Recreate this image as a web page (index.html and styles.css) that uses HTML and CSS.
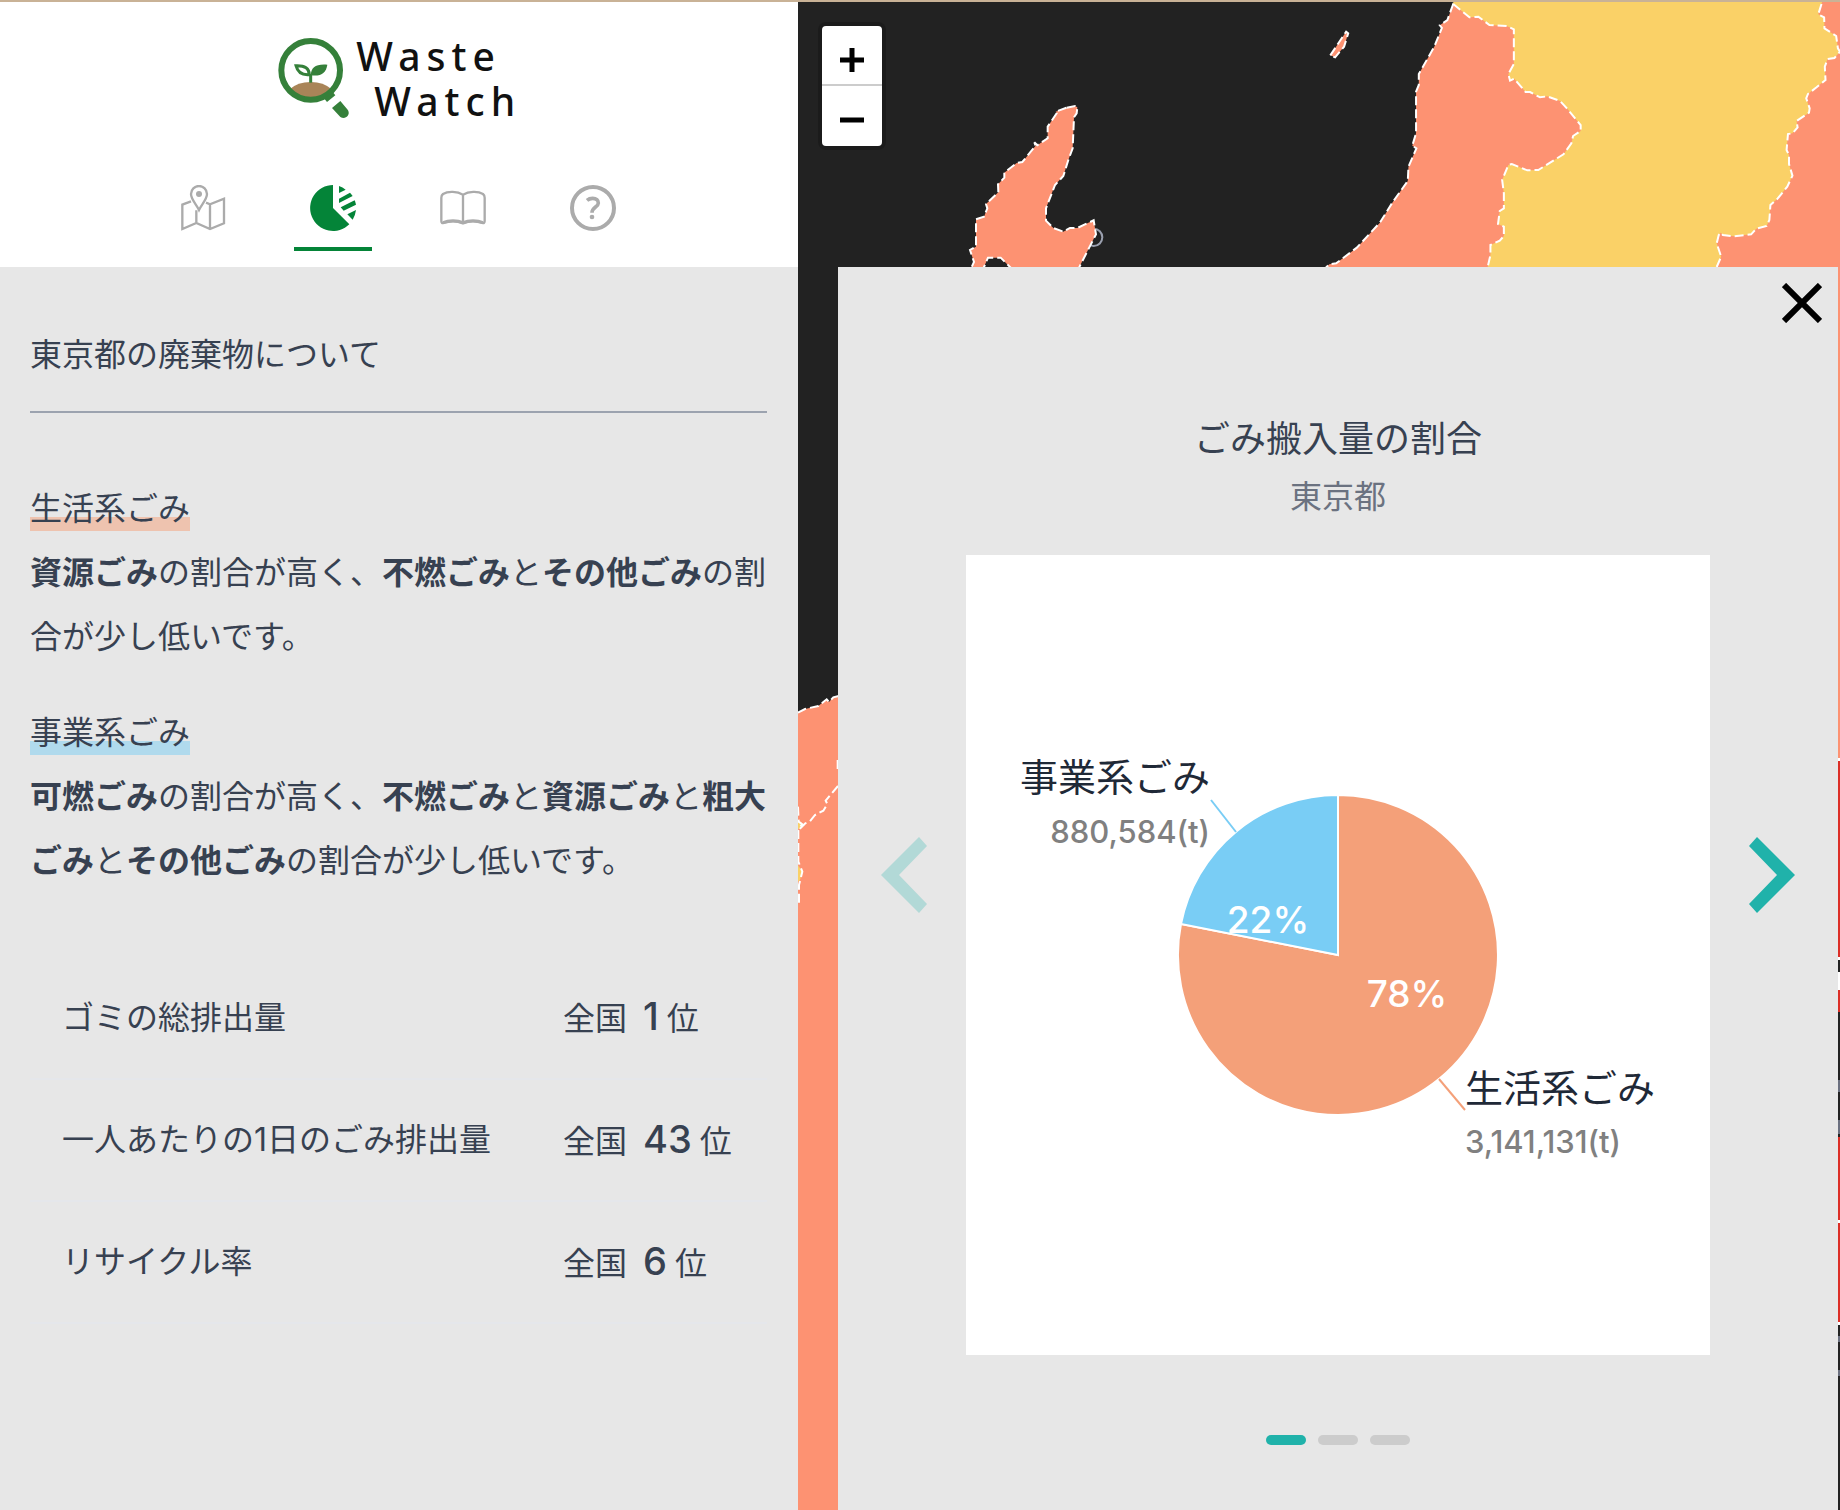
FILE: index.html
```html
<!DOCTYPE html>
<html lang="ja">
<head>
<meta charset="utf-8">
<meta name="viewport" content="width=device-width, initial-scale=1">
<title>Waste Watch</title>
<link rel="stylesheet" href="styles.css">
</head>
<body>
<div class="app">
  <aside class="sidebar">
    <header class="header">
      <svg class="logo" viewBox="50 105 726 258" role="img" aria-label="Waste Watch">
        <circle cx="151" cy="211" r="86" fill="#fff"/>
        <path d="M88 268Q112 246 151 246T214 268Q190 298 151 298T88 268Z" fill="#a98458"/>
        <circle cx="151" cy="211" r="88" fill="none" stroke="#35803a" stroke-width="18"/>
        <path d="M151 248V222" stroke="#35803a" stroke-width="9"/>
        <path d="M151 226C152 203 166 191 201 194C197 218 184 230 151 226Z" fill="#35803a"/>
        <path d="M147 224C147 205 134 196 107 197C112 217 124 226 147 224Z" fill="none" stroke="#35803a" stroke-width="9"/>
        <path d="M192 296L217 276L225 286L200 306Z" fill="#35803a"/>
        <path d="M215 324L240 303L262 329C268 338 265 346 258 351C251 356 243 355 238 349Z" fill="#35803a"/>
        <text class="logo-text" x="288" y="212">Waste</text>
        <text class="logo-text" x="342" y="347">Watch</text>
      </svg>
      <nav class="tabs" aria-label="メニュー">
        <a class="tab" href="#map" aria-label="地図">
          <svg class="tab-icon" viewBox="0 0 138 138" fill="none" stroke="currentColor" stroke-width="7">
            <path d="M33 49L7 59V132L49 114L90 132L132 115V41L90 58L78 53M49 76V114M90 58V132"/>
            <path d="M57 75C49 58 33 43 33 27A24 24 0 0 1 81 27C81 43 65 58 57 75Z"/>
            <circle cx="57" cy="27" r="9" fill="currentColor" stroke="none"/>
          </svg>
        </a>
        <a class="tab tab-active" href="#chart" aria-label="グラフ" aria-current="page">
          <svg class="tab-icon" viewBox="0 0 138 138" fill="currentColor">
            <path d="M69 0A69 69 0 1 0 118 118L69 69Z"/>
            <path d="M87 3Q98 7 107 14L87 24ZM87 41L120 23Q125 28 128 33L87 54ZM92 67L134 46Q137 53 138 59L101 77ZM112 88L138 75Q136 91 128 104Z"/>
          </svg>
        </a>
        <a class="tab" href="#guide" aria-label="解説">
          <svg class="tab-icon" viewBox="0 0 138 138" fill="none" stroke="currentColor" stroke-width="7">
            <path d="M69 29C52 19 24 18 9 27Q4 31 4 38V108Q4 116 11 114C28 108 52 108 69 115C86 108 110 108 127 114Q134 116 134 108V38Q134 31 129 27C114 18 86 19 69 29V115"/>
            <path d="M9 113C26 105 52 105 69 113C86 105 112 105 129 113" stroke-width="9"/>
          </svg>
        </a>
        <a class="tab" href="#help" aria-label="ヘルプ">
          <svg class="tab-icon" viewBox="0 0 138 138" fill="none" stroke="currentColor">
            <circle cx="69" cy="69" r="63" stroke-width="12"/>
            <path d="M51 46Q58 40 68 40C79 40 85 46 85 54C85 66 66 67 66 83" stroke-width="11"/>
            <circle cx="66" cy="96" r="7" fill="currentColor" stroke="none"/>
          </svg>
        </a>
      </nav>
    </header>
    <main class="summary">
      <h1 class="summary-title">東京都の廃棄物について</h1>
      <section class="waste">
        <h2 class="waste-title"><span class="mark mark-home">生活系ごみ</span></h2>
        <p class="waste-text"><strong>資源ごみ</strong>の割合が高く、<strong>不燃ごみ</strong>と<strong>その他ごみ</strong>の割合が少し低いです。</p>
      </section>
      <section class="waste">
        <h2 class="waste-title"><span class="mark mark-business">事業系ごみ</span></h2>
        <p class="waste-text"><strong>可燃ごみ</strong>の割合が高く、<strong>不燃ごみ</strong>と<strong>資源ごみ</strong>と<strong>粗大ごみ</strong>と<strong>その他ごみ</strong>の割合が少し低いです。</p>
      </section>
      <table class="ranks">
        <tr><th scope="row">ゴミの総排出量</th><td>全国<b>1</b>位</td></tr>
        <tr><th scope="row">一人あたりの1日のごみ排出量</th><td>全国<b>43</b>位</td></tr>
        <tr><th scope="row">リサイクル率</th><td>全国<b>6</b>位</td></tr>
      </table>
    </main>
  </aside>

  <div class="map">
    <svg class="map-canvas" viewBox="798 2 1042 1508" preserveAspectRatio="xMinYMin slice" aria-hidden="true">
      <g transform="translate(790 0) scale(.33333)">
        <circle cx="911" cy="712" r="26" fill="none" stroke="#9a9fae" stroke-width="6"/>
        <path class="area coral" d="M830 323L855 318L862 322L860 340L852 352L848 445L835 480L820 528L795 555L768 625V662L790 684L820 695L840 684H862L911 661L918 703L868 801L860 830H690L660 801L632 773H594L582 801L570 830L545 801L552 786L540 750L558 740V658L582 650L592 625L588 612L625 577L624 553L643 533V518L680 489L697 486L737 437L733 427L742 436L773 415V380L800 340L797 335Z"/>
      </g>
      <path class="coral" d="M1690 2H1840V758H1690Z"/>
      <g transform="translate(1300 0) scale(.34437 .33333)">
        <path class="area coral" d="M88 166L134 95L140 100L128 140L102 172Z"/>
        <path class="area coral" d="M445 12L428 60L406 76L412 84L390 140L345 222V255L337 275V400L326 437L338 445L315 500L313 543L270 605L232 668L165 743L105 790L85 793L75 803L100 830H560L800 560L900 300L640 60Z"/>
        <path class="yellow" d="M445 0L445 12L492 52L518 50L550 75L600 78L621 88V192L605 222L610 242L622 236L655 276L668 276L697 292L718 289L755 303L775 325L815 375V393L793 408L788 430L765 463L692 510L660 511L615 492L605 495L587 540L592 580V625L580 633L575 672L592 680V708L580 722L553 735V765L545 801V830H1205L1210 801L1223 770L1210 730L1216 705L1222 698L1228 705L1260 709L1310 703L1325 686L1355 678L1363 660L1366 615L1385 598L1415 560L1430 527L1420 492V465L1413 450L1417 402L1430 400L1445 382L1442 363L1478 338L1480 325L1470 295L1475 282L1500 262L1526 240L1524 200L1532 177L1552 174L1568 155L1562 145L1557 108L1523 85L1522 52L1505 43L1512 20L1518 0Z"/>
        <path class="area line" d="M445 12L492 52L518 50L550 75L600 78L621 88V192L605 222L610 242L622 236L655 276L668 276L697 292L718 289L755 303L775 325L815 375V393L793 408L788 430L765 463L692 510L660 511L615 492L605 495L587 540L592 580V625L580 633L575 672L592 680V708L580 722L553 735V765L545 801"/>
        <path class="area line" d="M1210 801L1223 770L1210 730L1216 705L1222 698L1228 705L1260 709L1310 703L1325 686L1355 678L1363 660L1366 615L1385 598L1415 560L1430 527L1420 492V465L1413 450L1417 402L1430 400L1445 382L1442 363L1478 338L1480 325L1470 295L1475 282L1500 262L1526 240L1524 200L1532 177L1552 174L1568 155L1562 145L1557 108L1523 85L1522 52L1505 43L1512 20L1518 0"/>
      </g>
      <g transform="translate(780 680) scale(.33333)">
        <path class="coral" d="M54 98L75 87L115 78L140 58L147 66L160 52L176 48V2500H54Z"/>
        <path class="yellow" d="M54 425L66 428L62 445L54 447ZM54 556L67 575L60 600L54 605Z"/>
        <path class="area line" d="M54 98L75 87L115 78L140 58L147 66L160 52L176 48M174 318L137 362L142 372L130 392L105 405L90 424L76 430L58 448M54 380L56 425L66 432L55 452V545L67 575L57 615V680M173 240V270"/>
      </g>
      <path fill="#dc2f27" d="M1838 758H1840V957H1838ZM1838 990H1840V1012H1838ZM1838 1137H1840V1323H1838Z"/>
      <path fill="#fff" d="M1838 758H1840V761H1838ZM1838 957H1840V960H1838ZM1838 972H1840V990H1838ZM1838 1220H1840V1223H1838ZM1838 1322H1840V1325H1838Z"/>
      <path fill="#6b7080" d="M1838 1080H1840V1092H1838ZM1838 1120H1840V1134H1838ZM1838 1336H1840V1342H1838ZM1838 1370H1840V1376H1838Z"/>
    </svg>

    <div class="zoom">
      <button class="zoom-button" type="button" aria-label="拡大">
        <svg viewBox="0 0 24 24" width="24" height="24"><path d="M0 12H24M12 0V24" stroke="#000" stroke-width="5"/></svg>
      </button>
      <button class="zoom-button" type="button" aria-label="縮小">
        <svg viewBox="0 0 24 24" width="24" height="24"><path d="M0 12H24" stroke="#000" stroke-width="5"/></svg>
      </button>
    </div>

    <section class="panel" aria-labelledby="panel-title">
      <button class="close" type="button" aria-label="閉じる">
        <svg viewBox="0 0 40 40" width="40" height="40"><path d="M2 2L38 38M38 2L2 38" stroke="#000" stroke-width="6"/></svg>
      </button>
      <h2 class="panel-title" id="panel-title">ごみ搬入量の割合</h2>
      <p class="panel-area">東京都</p>
      <div class="slider">
        <button class="arrow" type="button" aria-label="前へ" disabled>
          <svg viewBox="0 0 50 80" width="50" height="80"><path d="M4 40L42 2L50 11L22 40L50 69L42 78Z" fill="currentColor"/></svg>
        </button>
        <svg class="chart" viewBox="0 0 744 800" role="img" aria-label="ごみ搬入量の割合の円グラフ">
          <path d="M372 400V240A160 160 0 1 1 215 369Z" fill="#f4a079" stroke="#fff" stroke-width="2"/>
          <path d="M372 400L215 369A160 160 0 0 1 372 240Z" fill="#79cdf5" stroke="#fff" stroke-width="2"/>
          <path d="M245 245L270 277" stroke="#79cdf5" stroke-width="2"/>
          <path d="M473 524L499 555" stroke="#f4a079" stroke-width="2"/>
          <text class="chart-name end" x="244" y="236">事業系ごみ</text>
          <text class="chart-value end" x="244" y="288">880,584(t)</text>
          <text class="chart-rate" x="302" y="378">22%</text>
          <text class="chart-rate" x="441" y="452">78%</text>
          <text class="chart-name" x="499" y="547">生活系ごみ</text>
          <text class="chart-value" x="499" y="598">3,141,131(t)</text>
        </svg>
        <button class="arrow" type="button" aria-label="次へ">
          <svg viewBox="0 0 50 80" width="50" height="80"><path d="M46 40L8 2L0 11L28 40L0 69L8 78Z" fill="currentColor"/></svg>
        </button>
      </div>
      <div class="dots">
        <button class="dot dot-active" type="button" aria-label="1枚目"></button>
        <button class="dot" type="button" aria-label="2枚目"></button>
        <button class="dot" type="button" aria-label="3枚目"></button>
      </div>
    </section>
  </div>
</div>
</body>
</html>
```

FILE: styles.css
```css
* {
  box-sizing: border-box;
}

body {
  margin: 0;
  font-family: Inter, "Noto Sans CJK JP", sans-serif;
  color: #374151;
  background: #e7e7e7;
}

h1, h2, p {
  margin: 0;
  font-weight: 400;
}

button {
  padding: 0;
  border: 0;
  background: none;
  cursor: pointer;
}

svg {
  display: block;
}

.app {
  display: grid;
  grid-template-columns: 399fr 521fr;
  min-height: 100vh;
  border-top: 2px solid #c9b296;
}

/* Sidebar */

.sidebar {
  background: #e7e7e7;
}

.header {
  display: flex;
  flex-direction: column;
  align-items: center;
  padding: 33px 2px 16px 0;
  background: #fff;
}

.logo {
  width: 242px;
  height: 86px;
  overflow: visible;
}

.logo-text {
  font-family: "Noto Sans", sans-serif;
  font-size: 117px;
  font-weight: 500;
  letter-spacing: 18px;
  fill: #111;
}

.tabs {
  display: flex;
  gap: 52px;
  margin-top: 64px;
}

.tab {
  display: flex;
  justify-content: center;
  width: 78px;
  padding-bottom: 16px;
  border-bottom: 4px solid transparent;
  color: #ababab;
}

.tab-active {
  color: #048438;
  border-bottom-color: #048438;
}

.tab-icon {
  width: 46px;
  height: 46px;
}

.summary {
  padding: 56px 31px 64px 30px;
  font-size: 32px;
  line-height: 64px;
}

.summary-title {
  margin-bottom: 64px;
  padding-bottom: 24px;
  border-bottom: 2px solid #9ca3af;
  font-size: 32px;
}

.waste {
  margin-bottom: 32px;
}

.waste-title {
  font-size: 32px;
}

.mark {
  padding-bottom: 3px;
}

.mark-home {
  background: linear-gradient(transparent 66%, #eec3af 66%);
}

.mark-business {
  background: linear-gradient(transparent 66%, #b0daed 66%);
}

.ranks {
  width: 100%;
  margin-top: 64px;
  border-collapse: collapse;
}

.ranks tr {
  border-bottom: 2px solid #e5e7eb;
}

.ranks th,
.ranks td {
  height: 122px;
  padding: 0 0 0 32px;
  font-weight: 400;
  text-align: left;
  white-space: nowrap;
}

.ranks b {
  margin: 0 8px 0 16px;
  font-size: 38px;
  font-weight: 500;
}

.ranks td {
  width: 236px;
}

/* Map */

.map {
  position: relative;
  overflow: hidden;
  background: #222;
}

.map-canvas {
  position: absolute;
  inset: 0;
  width: 100%;
  height: 100%;
}

.coral {
  fill: #fd9272;
}

.yellow {
  fill: #fad167;
}

.line {
  fill: none;
}

.area {
  stroke: #fff;
  stroke-width: 2px;
  stroke-dasharray: 9 4;
  vector-effect: non-scaling-stroke;
}

.zoom {
  position: absolute;
  top: 24px;
  left: 24px;
  border-radius: 4px;
  background: #fff;
  box-shadow: 0 0 0 4px rgba(0, 0, 0, 0.2);
}

.zoom-button {
  display: flex;
  align-items: center;
  justify-content: center;
  width: 60px;
  height: 60px;
  padding-top: 8px;
}

.zoom-button + .zoom-button {
  border-top: 2px solid #ccc;
  margin-top: -2px;
  height: 62px;
}

/* Chart panel */

.panel {
  position: absolute;
  top: 265px;
  right: 2px;
  bottom: 0;
  left: 40px;
  padding-top: 142px;
  background: #e7e7e7;
  text-align: center;
}

.close {
  position: absolute;
  top: 16px;
  right: 16px;
}

.panel-title {
  font-size: 36px;
  line-height: 60px;
}

.panel-area {
  font-size: 32px;
  line-height: 56px;
  color: #6b7280;
}

.slider {
  display: grid;
  grid-template-columns: 1fr minmax(0, 744px) 1fr;
  align-items: start;
  justify-items: center;
  margin-top: 30px;
}

.arrow {
  margin-top: 280px;
  color: #20b2aa;
}

.arrow:disabled {
  opacity: 0.26;
}

.chart {
  width: 100%;
  background: #fff;
}

.chart-name {
  font-size: 38px;
  fill: #1f2937;
}

.chart-value {
  font-size: 31px;
  font-weight: 500;
  fill: #808080;
}

.end {
  text-anchor: end;
}

.chart-rate {
  font-size: 37px;
  font-weight: 500;
  fill: #fff;
  text-anchor: middle;
}

.dots {
  display: flex;
  justify-content: center;
  gap: 12px;
  margin-top: 80px;
}

.dot {
  width: 40px;
  height: 10px;
  border-radius: 5px;
  background: #ccc;
}

.dot-active {
  background: #20b2aa;
}
```
